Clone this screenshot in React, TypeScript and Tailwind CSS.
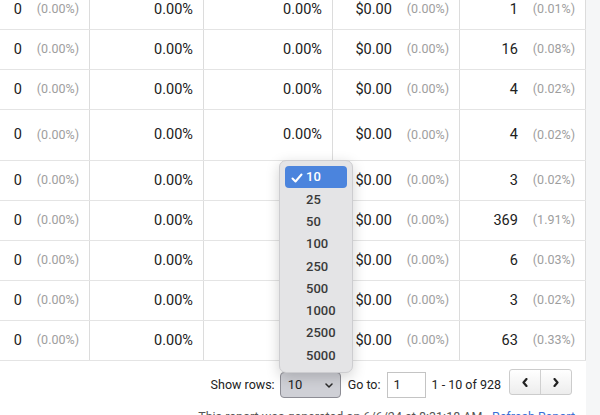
import React from "react";

type Row = { v: string; p: string; tall?: boolean };

const rows: Row[] = [
  { v: "1", p: "(0.01%)" },
  { v: "16", p: "(0.08%)" },
  { v: "4", p: "(0.02%)" },
  { v: "4", p: "(0.02%)", tall: true },
  { v: "3", p: "(0.02%)" },
  { v: "369", p: "(1.91%)" },
  { v: "6", p: "(0.03%)" },
  { v: "3", p: "(0.02%)" },
  { v: "63", p: "(0.33%)" },
];

const options = ["10", "25", "50", "100", "250", "500", "1000", "2500", "5000"];

function Pair({ v, p }: { v: string; p: string }) {
  return (
    <>
      <span className="text-[14.5px] text-[#212121]">{v}</span>
      <span className="ml-[15px] text-[12.5px] text-[#9e9e9e]">{p}</span>
    </>
  );
}

function Cell({ children }: { children: React.ReactNode }) {
  return (
    <div className="flex h-full items-center justify-end border-r border-[#dcdcdc] pr-[10px]">
      {children}
    </div>
  );
}

export default function App() {
  return (
    <div className="relative h-[415px] w-[600px] overflow-hidden bg-[#f5f6f7] font-[Roboto,sans-serif]">
      <div className="w-[586px] bg-white">
        <div className="mt-[-10px]">
          {rows.map((r, i) => (
            <div
              key={i}
              className={
                "grid grid-cols-[90px_114px_129px_127px_126px] border-b border-[#e4e4e4] " +
                (r.tall ? "h-[51px]" : "h-[40px]")
              }
            >
              <Cell>
                <Pair v="0" p="(0.00%)" />
              </Cell>
              <Cell>
                <span className="text-[14.5px] text-[#212121]">0.00%</span>
              </Cell>
              <Cell>
                <span className="text-[14.5px] text-[#212121]">0.00%</span>
              </Cell>
              <Cell>
                <Pair v="$0.00" p="(0.00%)" />
              </Cell>
              <Cell>
                <Pair v={r.v} p={r.p} />
              </Cell>
            </div>
          ))}
        </div>

        <div className="flex justify-end pr-[14px] pt-[8px]">
          <div className="flex items-start text-[12.5px] text-[#222]">
            <span className="mt-[3px] flex h-[26px] items-center">Show rows:</span>
            <div className="ml-[5px] mt-[3px] flex h-[26px] w-[61px] items-center justify-between rounded-[4px] border border-[#8d8d95] bg-[#cfd0d6] pl-[7px] pr-[7px]">
              <span className="text-[13px] text-[#1e1e1e]">10</span>
              <svg width="8" height="5" viewBox="0 0 8 5">
                <polyline points="1,1 4,4 7,1" fill="none" stroke="#2a2a2a" strokeWidth="1.5" strokeLinecap="round" strokeLinejoin="round" />
              </svg>
            </div>
            <span className="ml-[7px] mt-[3px] flex h-[26px] items-center">Go to:</span>
            <div className="ml-[6px] mt-[3px] flex h-[26px] w-[39px] items-center border border-[#c4c4c4] bg-white pl-[6px] text-[13px]">
              1
            </div>
            <span className="ml-[6px] mt-[3px] flex h-[26px] items-center">1 - 10 of 928</span>
            <div className="ml-[8px] flex h-[26px] w-[63px] overflow-hidden rounded-[3px] border border-[#cccccc] bg-gradient-to-b from-white to-[#ededed]">
              <div className="flex flex-1 items-center justify-center border-r border-[#d0d0d0]">
                <svg width="6" height="9" viewBox="0 0 6 9">
                  <polyline points="4.5,1 1.5,4.5 4.5,8" fill="none" stroke="#222" strokeWidth="2.2" strokeLinecap="round" strokeLinejoin="round" />
                </svg>
              </div>
              <div className="flex flex-1 items-center justify-center">
                <svg width="6" height="9" viewBox="0 0 6 9">
                  <polyline points="1.5,1 4.5,4.5 1.5,8" fill="none" stroke="#222" strokeWidth="2.2" strokeLinecap="round" strokeLinejoin="round" />
                </svg>
              </div>
            </div>
          </div>
        </div>

        <div className="mt-[11px] pr-[11px] text-right text-[12.5px] leading-[16px] text-[#555]">
          This report was generated on 6/6/24 at 8:31:18 AM -{" "}
          <span className="text-[#3a6fd6]">Refresh Report</span>
        </div>
        <div className="h-[20px]" />
      </div>

      <div className="absolute left-[279px] top-[160px] h-[213px] w-[74px] rounded-[7px] border border-[#cdcdd0] bg-[#e4e4e6] px-[5px] py-[5px] shadow-[0_4px_14px_rgba(0,0,0,0.18)]">
        {options.map((o, i) => (
          <div
            key={o}
            className={
              "relative flex h-[22.3px] items-center pl-[21px] text-[13px] font-medium " +
              (i === 0 ? "rounded-[4px] bg-[#4b84dd] text-white" : "text-[#3a3a3a]")
            }
          >
            {i === 0 && (
              <svg className="absolute left-[6px] top-[6.5px]" width="12" height="10" viewBox="0 0 12 10">
                <polyline points="1.5,5.5 4.5,8.5 10.5,1.5" fill="none" stroke="white" strokeWidth="2" strokeLinecap="round" strokeLinejoin="round" />
              </svg>
            )}
            {o}
          </div>
        ))}
      </div>
    </div>
  );
}
